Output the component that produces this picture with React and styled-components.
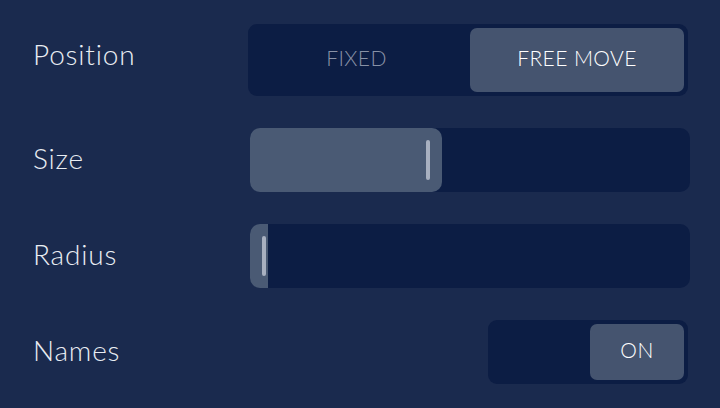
import React from "react";
import styled, {createGlobalStyle} from "styled-components";

const GlobalStyle = createGlobalStyle`
    html, body{
        margin: 0;
        padding: 0;
        background: #1a2a4e;
    }
    body{
        font-family: Lato, "Open Sans", sans-serif;
    }
`;

const Panel = styled.div`
    width: 720px;
    height: 408px;
    box-sizing: border-box;
    padding: 24px 30px 24px 33px;
    background: #1a2a4e;
    display: flex;
    flex-direction: column;
    gap: 32px;
`;

const Row = styled.div`
    display: flex;
    align-items: flex-start;
    justify-content: space-between;
`;

const Label = styled.div`
    color: #e9edf3;
    font-size: 28px;
    font-weight: 300;
    letter-spacing: 0.8px;
    line-height: 60px;
    height: 64px;
`;

const Segmented = styled.div`
    width: 440px;
    height: 72px;
    margin-right: 2px;
    box-sizing: border-box;
    padding: 4px;
    border-radius: 9px;
    background: #0c1d44;
    display: flex;
`;

const Segment = styled.div`
    flex: ${p => p.$active ? "0 0 214px" : "1"};
    display: flex;
    align-items: center;
    justify-content: center;
    box-sizing: border-box;
    padding: ${p => p.$active ? "0 0 5px" : "0 9px 5px 0"};
    border-radius: 7px;
    font-size: 21px;
    font-weight: 300;
    letter-spacing: 0.4px;
    color: ${p => p.$active ? "#ffffff" : "#8891a6"};
    background: ${p => p.$active ? "#45546f" : "transparent"};
`;

const Track = styled.div`
    position: relative;
    width: 440px;
    height: 64px;
    border-radius: 10px;
    background: #0c1d44;
    overflow: hidden;
`;

const Fill = styled.div`
    height: 100%;
    border-radius: ${p => p.$square ? "0" : "0 10px 10px 0"};
    background: #4a5a74;
`;

const Handle = styled.div`
    position: absolute;
    top: 12px;
    width: 4px;
    height: 40px;
    border-radius: 2px;
    background: #a8b0c0;
`;

const Toggle = styled.div`
    width: 200px;
    height: 64px;
    margin-right: 2px;
    box-sizing: border-box;
    padding: 4px;
    border-radius: 9px;
    background: #0c1d44;
    display: flex;
    justify-content: flex-end;
`;

const Knob = styled.div`
    width: 94px;
    display: flex;
    align-items: center;
    justify-content: center;
    padding-bottom: 5px;
    box-sizing: border-box;
    border-radius: 7px;
    background: #45546f;
    color: #ffffff;
    font-size: 21px;
    font-weight: 300;
    letter-spacing: 0.4px;
`;

const Slider = ({fill, handle, square}) => (
    <Track>
        <Fill $square={square} style={{width: fill}} />
        <Handle style={{left: handle}} />
    </Track>
);

const App = () => {
    return(
        <>
        <GlobalStyle />
        <Panel>
            <Row>
                <Label>Position</Label>
                <Segmented>
                    <Segment>FIXED</Segment>
                    <Segment $active>FREE MOVE</Segment>
                </Segmented>
            </Row>
            <Row>
                <Label>Size</Label>
                <Slider fill={192} handle={176} />
            </Row>
            <Row>
                <Label>Radius</Label>
                <Slider fill={18} handle={12} square />
            </Row>
            <Row>
                <Label>Names</Label>
                <Toggle>
                    <Knob>ON</Knob>
                </Toggle>
            </Row>
        </Panel>
        </>
    )
}

export default App;
